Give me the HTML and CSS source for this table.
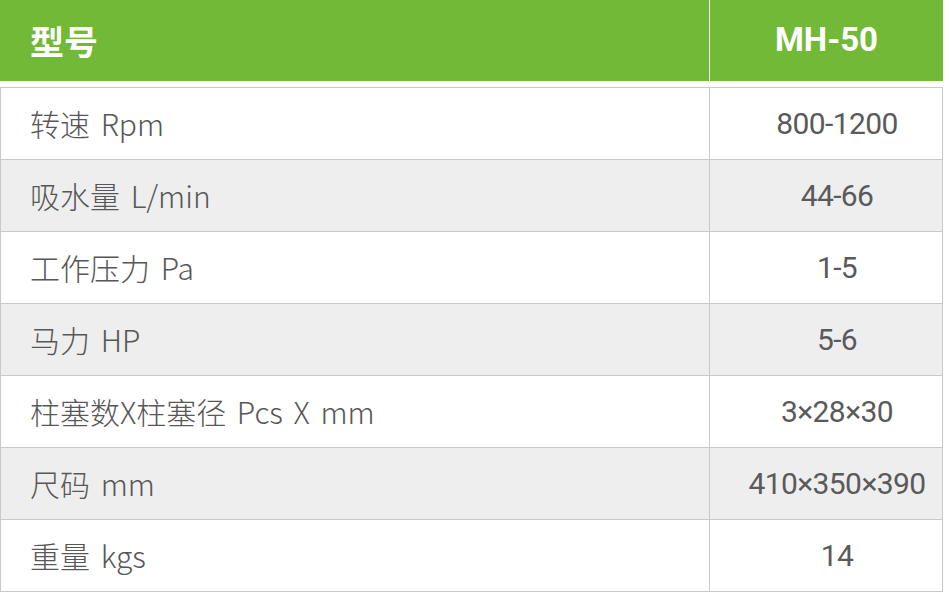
FILE: index.html
```html
<!DOCTYPE html>
<html lang="zh">
<head>
<meta charset="utf-8">
<link rel="stylesheet" href="styles.css">
</head>
<body>
<div class="spec">
  <div class="head">
    <div class="cell name">型号</div>
    <div class="cell val">MH-50</div>
  </div>
  <div class="body">
    <div class="row"><div class="cell name">转速 Rpm</div><div class="cell val">800-1200</div></div>
    <div class="row alt"><div class="cell name">吸水量 L/min</div><div class="cell val">44-66</div></div>
    <div class="row"><div class="cell name">工作压力 Pa</div><div class="cell val">1-5</div></div>
    <div class="row alt"><div class="cell name">马力 HP</div><div class="cell val">5-6</div></div>
    <div class="row"><div class="cell name">柱塞数X柱塞径 Pcs X mm</div><div class="cell val">3×28×30</div></div>
    <div class="row alt"><div class="cell name">尺码 mm</div><div class="cell val">410×350×390</div></div>
    <div class="row"><div class="cell name">重量 kgs</div><div class="cell val">14</div></div>
  </div>
</div>
</body>
</html>
```
FILE: styles.css
```css
html, body { margin: 0; padding: 0; background: #fff; }
body { font-family: "Noto Sans CJK SC", "Noto Sans", sans-serif; color: #575757; }
.spec { width: 943px; }
.head {
  display: grid;
  grid-template-columns: 709px 1px 233px;
  height: 81px;
  background: #72b937;
  color: #fff;
  font-weight: 700;
}
.head .name { grid-column: 1; font-size: 34px; padding-left: 30px; }
.head .val {
  grid-column: 3;
  border-left: 1px solid #fff;
  margin-left: -1px;
  font-family: Roboto, sans-serif;
  font-size: 33px;
  padding-bottom: 2px;
}
.cell { display: flex; align-items: center; }
.val { justify-content: center; }
.body {
  margin-top: 6px;
  border: 1px solid #c9c9c9;
}
.row {
  display: grid;
  grid-template-columns: 708px 233px;
  height: 71px;
  border-bottom: 1px solid #c9c9c9;
}
.row:last-child { border-bottom: none; }
.row.alt { background: #eeeeee; }
.row .name {
  padding-left: 29px;
  font-size: 30px;
  font-weight: 300;
  word-spacing: 4px;
  padding-bottom: 2px;
}
.row .val {
  border-left: 1px solid #c9c9c9;
  font-family: Roboto, sans-serif;
  font-size: 30px;
  letter-spacing: -0.6px;
  padding-left: 22px;
  color: #5a5a5a;
}
```
